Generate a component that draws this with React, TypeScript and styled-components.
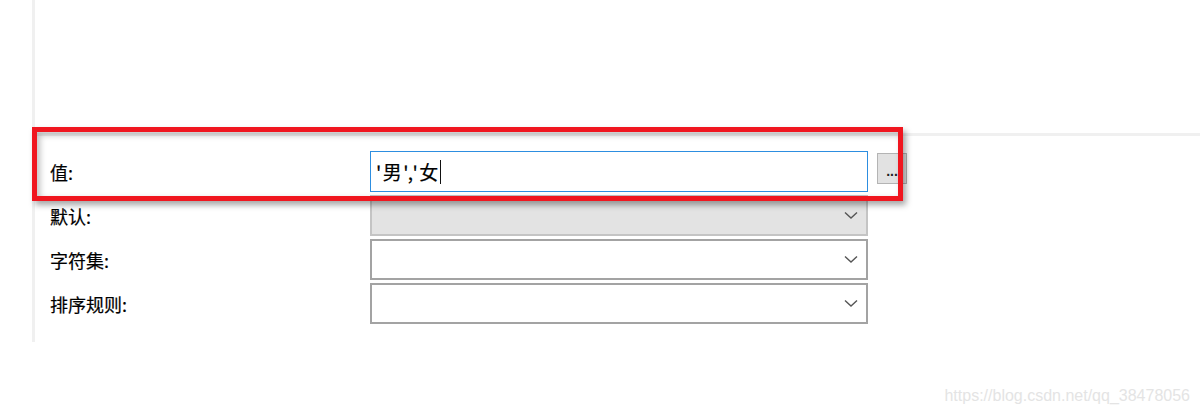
import React from "react";
import styled, { createGlobalStyle } from "styled-components";

const Global = createGlobalStyle`
  html, body { margin: 0; padding: 0; background: #ffffff; }
  body { font-family: "Noto Sans CJK SC", "Noto Sans", sans-serif; }
`;

const Page = styled.div`
  position: relative;
  width: 1200px;
  height: 414px;
  overflow: hidden;
  background: #fff;
`;

const Panel = styled.div`
  margin-left: 32px;
  width: 1165px;
  height: 342px;
  border-left: 3px solid #f0f0f0;
  display: flex;
  flex-direction: column;
`;

const TopArea = styled.div`
  height: 133px;
  border-bottom: 3px solid #f0f0f0;
`;

const Form = styled.div`
  padding: 15px 0 0 15px;
  display: flex;
  flex-direction: column;
  gap: 3px;
`;

const Row = styled.div`
  display: grid;
  grid-template-columns: 311px 498px 30px;
  column-gap: 9px;
  align-items: center;
  height: 41px;
`;

const Label = styled.div`
  font-size: 18px;
  color: #000;
  line-height: 1;
  -webkit-text-stroke: 0.2px #000;
`;

const TextInput = styled.div`
  box-sizing: border-box;
  height: 41px;
  border: 1.5px solid #2d8ee0;
  background: #fff;
  display: flex;
  align-items: center;
  padding-left: 5px;
  font-size: 19px;
  letter-spacing: 1.5px;
  color: #000;
  -webkit-text-stroke: 0.2px #000;
  font-family: "Noto Sans CJK SC", sans-serif;
`;

const Caret = styled.span`
  display: inline-block;
  width: 1.5px;
  height: 24px;
  background: #111;
  margin-left: 0;
`;

const Select = styled.div<{ $disabled?: boolean }>`
  box-sizing: border-box;
  height: 41px;
  border: 2px solid ${(p) => (p.$disabled ? "#c4c4c4" : "#a3a3a3")};
  background: ${(p) => (p.$disabled ? "#e3e3e3" : "#fff")};
  display: flex;
  align-items: center;
  justify-content: flex-end;
  padding-right: 8px;
`;

const EllipsisButton = styled.div`
  box-sizing: border-box;
  align-self: start;
  margin-top: 2px;
  width: 30px;
  height: 31px;
  border: 1.5px solid #b4b4b4;
  background: #e2e2e2;
  display: flex;
  align-items: center;
  justify-content: center;
  padding-top: 5px;
  font-family: "Liberation Sans", sans-serif;
  font-size: 14px;
  line-height: 1;
  font-weight: bold;
  color: #222;
`;

const Highlight = styled.div`
  position: absolute;
  left: 32px;
  top: 127px;
  width: 871px;
  height: 74px;
  box-sizing: border-box;
  border: 5px solid #f0161f;
  box-shadow: 3px 4px 6px rgba(0, 0, 0, 0.35), inset 3px 3px 6px rgba(0, 0, 0, 0.25);
  pointer-events: none;
`;

const Watermark = styled.div`
  margin-top: 45px;
  padding-right: 10px;
  text-align: right;
  font-family: "Liberation Sans", Arial, sans-serif;
  font-size: 16px;
  color: #e4e4e4;
`;

const Chevron = () => (
  <svg width="14" height="9" viewBox="0 0 14 9">
    <polyline points="1,1.5 7,7 13,1.5" fill="none" stroke="#555" strokeWidth="1.4" />
  </svg>
);

export default function App() {
  return (
    <Page>
      <Global />
      <Panel>
        <TopArea />
        <Form>
          <Row>
            <Label>值:</Label>
            <TextInput>
              '男','女<Caret />
            </TextInput>
            <EllipsisButton>...</EllipsisButton>
          </Row>
          <Row>
            <Label>默认:</Label>
            <Select $disabled>
              <Chevron />
            </Select>
          </Row>
          <Row>
            <Label>字符集:</Label>
            <Select>
              <Chevron />
            </Select>
          </Row>
          <Row>
            <Label>排序规则:</Label>
            <Select>
              <Chevron />
            </Select>
          </Row>
        </Form>
      </Panel>
      <Watermark>https://blog.csdn.net/qq_38478056</Watermark>
      <Highlight />
    </Page>
  );
}
